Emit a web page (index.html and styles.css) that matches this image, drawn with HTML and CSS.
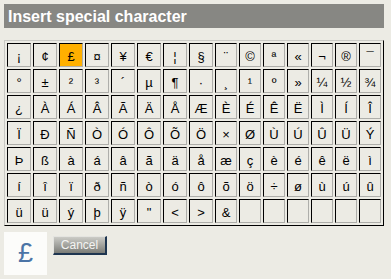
FILE: index.html
```html
<!DOCTYPE html>
<html>
<head>
    <meta charset="utf-8">
    <title>Insert special character</title>
    <link rel="stylesheet" href="styles.css">
</head>
<body>
    <div class="dialog">
        <div class="titlebar">Insert special character</div>
        <div class="charmap">
            <span class="ch">¡</span><span class="ch">¢</span><span class="ch selected">£</span><span class="ch">¤</span><span class="ch">¥</span><span class="ch">€</span><span class="ch">¦</span><span class="ch">§</span><span class="ch">¨</span><span class="ch">©</span><span class="ch">ª</span><span class="ch">«</span><span class="ch">¬</span><span class="ch">®</span><span class="ch">¯</span>
            <span class="ch">°</span><span class="ch">±</span><span class="ch">²</span><span class="ch">³</span><span class="ch">´</span><span class="ch">µ</span><span class="ch">¶</span><span class="ch">·</span><span class="ch">¸</span><span class="ch">¹</span><span class="ch">º</span><span class="ch">»</span><span class="ch">¼</span><span class="ch">½</span><span class="ch">¾</span>
            <span class="ch">¿</span><span class="ch">À</span><span class="ch">Á</span><span class="ch">Â</span><span class="ch">Ã</span><span class="ch">Ä</span><span class="ch">Å</span><span class="ch">Æ</span><span class="ch">È</span><span class="ch">É</span><span class="ch">Ê</span><span class="ch">Ë</span><span class="ch">Ì</span><span class="ch">Í</span><span class="ch">Î</span>
            <span class="ch">Ï</span><span class="ch">Ð</span><span class="ch">Ñ</span><span class="ch">Ò</span><span class="ch">Ó</span><span class="ch">Ô</span><span class="ch">Õ</span><span class="ch">Ö</span><span class="ch">×</span><span class="ch">Ø</span><span class="ch">Ù</span><span class="ch">Ú</span><span class="ch">Û</span><span class="ch">Ü</span><span class="ch">Ý</span>
            <span class="ch">Þ</span><span class="ch">ß</span><span class="ch">à</span><span class="ch">á</span><span class="ch">â</span><span class="ch">ã</span><span class="ch">ä</span><span class="ch">å</span><span class="ch">æ</span><span class="ch">ç</span><span class="ch">è</span><span class="ch">é</span><span class="ch">ê</span><span class="ch">ë</span><span class="ch">ì</span>
            <span class="ch">í</span><span class="ch">î</span><span class="ch">ï</span><span class="ch">ð</span><span class="ch">ñ</span><span class="ch">ò</span><span class="ch">ó</span><span class="ch">ô</span><span class="ch">õ</span><span class="ch">ö</span><span class="ch">÷</span><span class="ch">ø</span><span class="ch">ù</span><span class="ch">ú</span><span class="ch">û</span>
            <span class="ch">ü</span><span class="ch">ü</span><span class="ch">ý</span><span class="ch">þ</span><span class="ch">ÿ</span><span class="ch">"</span><span class="ch">&lt;</span><span class="ch">&gt;</span><span class="ch">&amp;</span><span class="ch"></span><span class="ch"></span><span class="ch"></span><span class="ch"></span><span class="ch"></span><span class="ch"></span>
        </div>
        <div class="footer">
            <div class="preview">£</div>
            <button type="button" class="cancel-btn">Cancel</button>
        </div>
    </div>
</body>
</html>
```

FILE: styles.css
```css
body { margin: 0; padding: 4px; background: #ecebe4; font-family: "Liberation Sans", Arial, sans-serif; }
.dialog { width: 380px; }

.titlebar { height: 24px; line-height: 25px; padding-left: 4px; background: #878783; color: #fff; font-size: 16px; font-weight: bold; }

.charmap {
    display: grid; grid-template-columns: repeat(8, 24px) repeat(7, 22px); grid-auto-rows: 24px; gap: 2px;
    width: fit-content; margin-top: 12px; padding: 2px;
    border: 1px solid; border-color: #c8c8c3 #000 #000 #c8c8c3;
}
.ch {
    display: flex; align-items: center; justify-content: center; box-sizing: border-box; padding-top: 2px;
    border: 1px solid; border-color: #000 #aeaeaa #aeaeaa #000;
    font-size: 13px; color: #000;
}
.ch.selected { background: #ffb000; }

.footer { display: flex; align-items: flex-start; gap: 6px; margin-top: 6px; }
.preview { width: 43px; height: 43px; display: flex; align-items: center; justify-content: center; background: #fcfcfa; color: #4b74a6; font-size: 27px; }
.cancel-btn {
    width: 54px; height: 19px; margin-top: 4px; padding: 0; box-sizing: border-box;
    border: 1px solid; border-width: 1px 2px 2px 1px; border-color: #e4e4e0 #1e3550 #1e3550 #e4e4e0;
    background: linear-gradient(#cbcbc6, #7b7c77); color: #f4f4f2;
    font-family: "Liberation Sans", Arial, sans-serif; font-size: 12px; cursor: pointer;
}
```
